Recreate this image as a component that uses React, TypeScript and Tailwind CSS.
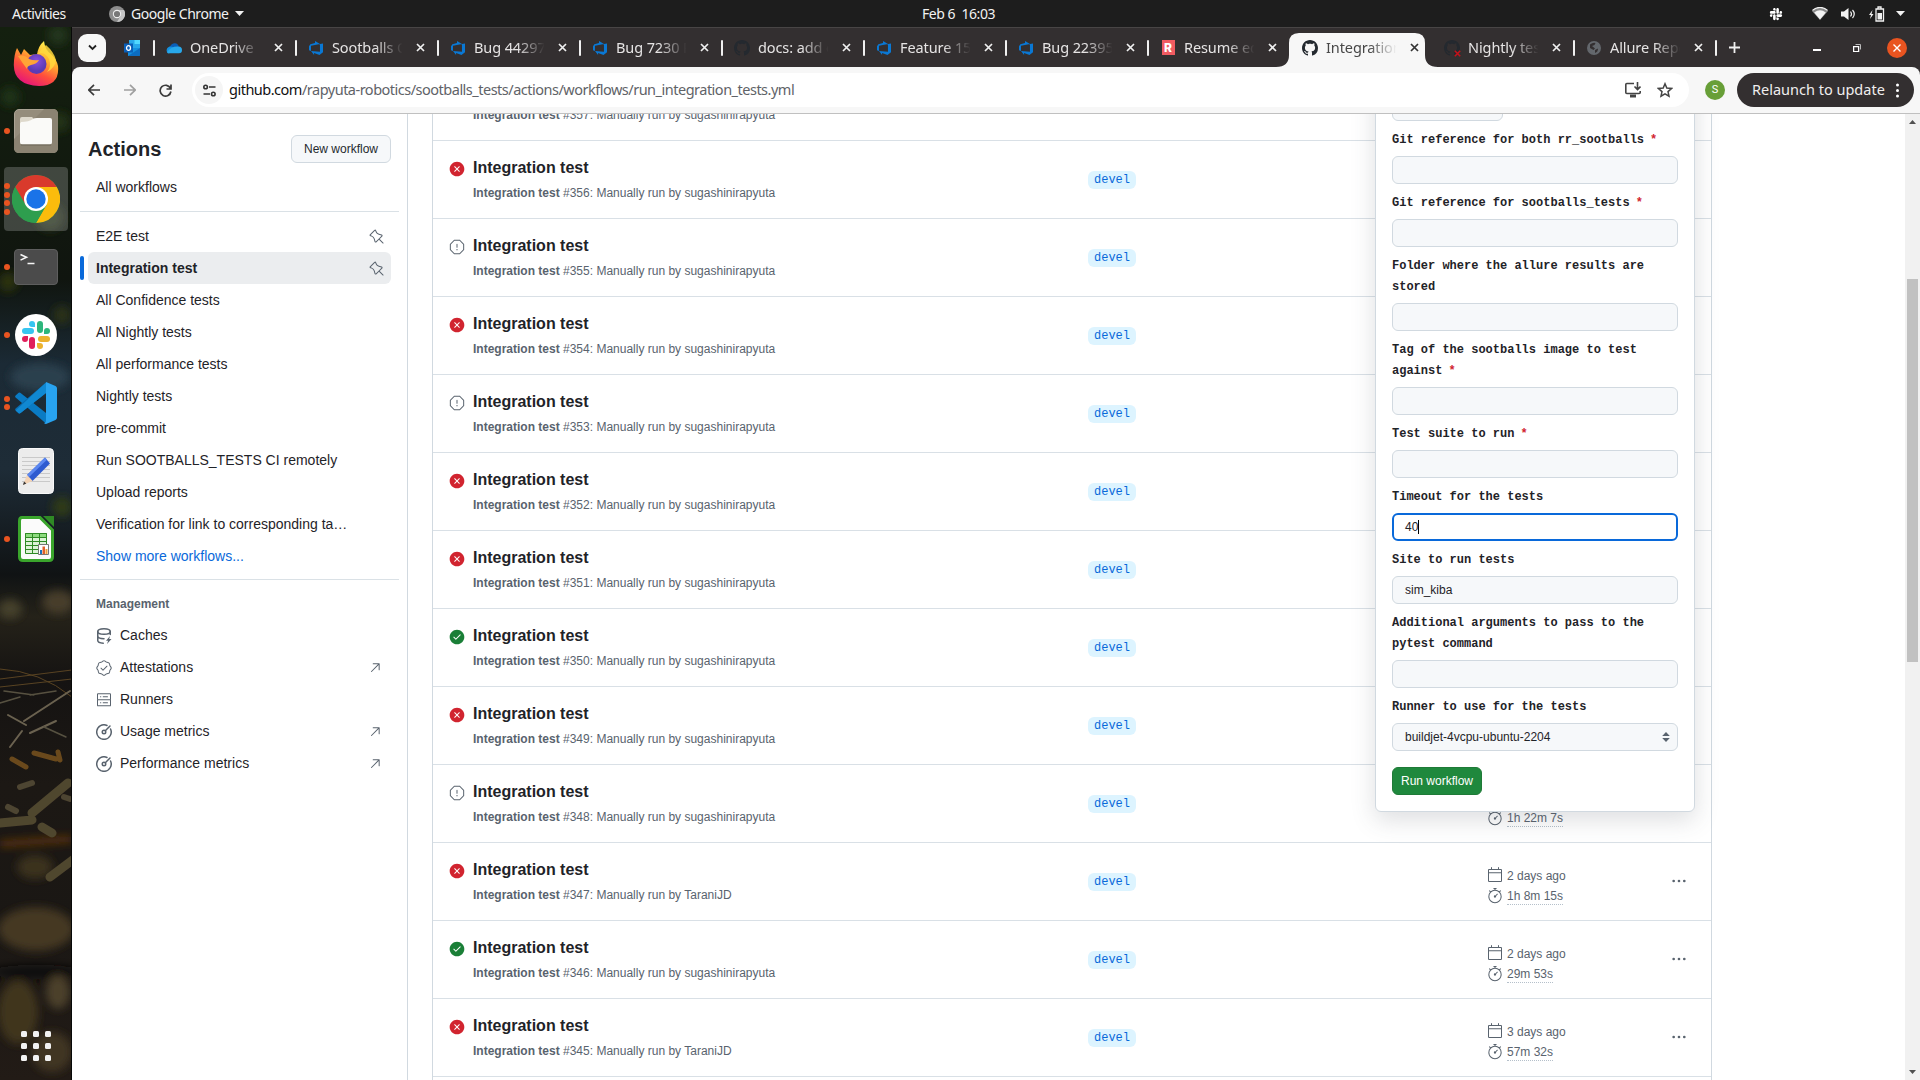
import React from 'react';
import {
  GoStopwatch, GoCalendar, GoPin, GoXCircleFill, GoCheckCircleFill, GoStop, GoKebabHorizontal,
  GoVerified, GoServer, GoArrowUpRight,
} from 'react-icons/go';
import { VscAzureDevops } from 'react-icons/vsc';
import { FaSlack } from 'react-icons/fa';

const ui = "font-['Noto_Sans',sans-serif]";

type IconProps = { className?: string };

function GithubMark({ className }: IconProps) {
  return (
    <svg className={className} viewBox="0 0 16 16" fill="currentColor">
      <path d="M8 0C3.580 0 0 3.580 0 8c0 3.540 2.290 6.530 5.470 7.590.4.070.550-.170.550-.380 0-.190-.010-.820-.010-1.490-2.010.370-2.530-.490-2.690-.940-.090-.230-.480-.940-.820-1.130-.280-.150-.680-.520-.010-.530.630-.010 1.080.580 1.230.820.720 1.210 1.870.870 2.330.660.070-.520.280-.870.510-1.070-1.780-.2-3.640-.890-3.640-3.950 0-.870.310-1.590.820-2.150-.080-.2-.360-1.020.080-2.120 0 0 .670-.210 2.200.820.640-.180 1.320-.270 2-.270.680 0 1.360.090 2 .270 1.530-1.040 2.200-.820 2.200-.820.440 1.100.160 1.920.080 2.120.510.560.820 1.270.820 2.150 0 3.070-1.870 3.750-3.650 3.950.290.250.540.730.540 1.480 0 1.070-.010 1.930-.010 2.200 0 .210.150.460.550.380A8.013 8.013 0 0 0 16 8c0-4.420-3.580-8-8-8Z" />
    </svg>
  );
}

function CacheIcon({ className }: IconProps) {
  return (
    <svg className={className} viewBox="0 0 16 16" fill="none" stroke="currentColor" strokeWidth="1.500">
      <ellipse cx="8" cy="3.500" rx="6.250" ry="2.750" />
      <path d="M1.750 3.500v9c0 1.300 2.200 2.500 5.500 2.700M1.750 8c0 1.400 2.300 2.700 6.250 2.700M14.250 3.500v3" strokeLinecap="round" />
      <path d="M14 8l-4 4.700h2.100L11 16l4.500-5h-2.300z" fill="currentColor" stroke="none" />
    </svg>
  );
}

function MeterIcon({ className }: IconProps) {
  return (
    <svg className={className} viewBox="0 0 16 16" fill="none" stroke="currentColor" strokeWidth="1.500" strokeLinecap="round">
      <path d="M11 1.450A7.250 7.250 0 1 0 14.550 5" />
      <circle cx="8" cy="8" r="1.750" />
      <path d="M9.300 6.700L14 2" />
    </svg>
  );
}

/* ---------- desktop top bar ---------- */

function TopBar() {
  return (
    <header className={`${ui} flex h-[27px] shrink-0 items-center bg-[#1d1d1d] text-[14px] leading-[27px] text-[#f2f2f2]`}>
      <div className="flex flex-1 items-center pl-3">
        <span className="w-[97px] whitespace-nowrap tracking-[-0.45px]">Activities</span>
        <svg className="h-4 w-4" viewBox="0 0 16 16">
          <circle cx="8" cy="8" r="8" fill="#8d8d8d" />
          <path d="M8 4h7A8 8 0 0 1 8 16l3.5-6z" fill="#c4c4c4" />
          <circle cx="8" cy="8" r="4.2" fill="#eee" />
          <circle cx="8" cy="8" r="3.1" fill="#777" />
        </svg>
        <span className="ml-[6px] whitespace-nowrap tracking-[-0.45px]">Google Chrome</span>
        <svg className="ml-[6px] h-[5px] w-[9px]" viewBox="0 0 9 5"><path d="M0 0h9L4.5 5z" fill="#f2f2f2" /></svg>
      </div>
      <span className="whitespace-pre tracking-[-0.45px]">Feb 6  16:03</span>
      <div className="flex flex-1 items-center justify-end pr-[15px] text-white">
        <FaSlack className="mr-[29px] h-[14px] w-[14px]" />
        <svg className="mr-[13px] h-[13px] w-4" viewBox="0 0 16 13">
          <path d="M0 4Q8-3.5 16 4L8 13z" fill="#8a8a8a" />
          <path d="M.4 3.4Q8-2.6 15.600 3.400" fill="none" stroke="#f2f2f2" strokeWidth="1.200" />
          <path d="M2.200 5.400Q8 1 13.800 5.400L8 12.500z" fill="#f2f2f2" />
        </svg>
        <svg className="mr-[12px] h-[14px] w-4" viewBox="0 0 16 14">
          <path d="M0 4.500h3L7.500 1v12L3 9.500H0z" fill="#f2f2f2" />
          <path d="M9.500 4.500q2 2.500 0 5M11.500 3q3.500 4 0 8" fill="none" stroke="#f2f2f2" strokeWidth="1.200" />
        </svg>
        <svg className="mr-[11px] h-[16px] w-[16px]" viewBox="0 0 16 16">
          <path d="M3.500 4L0 9h2l-1 4 3.500-5h-2z" fill="#f2f2f2" />
          <path d="M9 1h3v2H9zM7 3h7.500v12H7z" fill="none" stroke="#f2f2f2" strokeWidth="1.300" />
          <path d="M8.500 7H13v6.500H8.500z" fill="#f2f2f2" />
        </svg>
        <svg className="h-[5px] w-[9px]" viewBox="0 0 9 5"><path d="M0 0h9L4.5 5z" fill="#f2f2f2" /></svg>
      </div>
    </header>
  );
}

/* ---------- dock ---------- */

function Wallpaper() {
  return (
    <svg className="absolute inset-0 h-full w-full" viewBox="0 0 72 1053" preserveAspectRatio="none">
      <defs>
        <linearGradient id="wp" x1="0" y1="0" x2="0" y2="1">
          <stop offset="0" stopColor="#14200f" />
          <stop offset="0.24" stopColor="#10150f" />
          <stop offset="0.32" stopColor="#1b2a35" />
          <stop offset="0.42" stopColor="#1e2c37" />
          <stop offset="0.52" stopColor="#101314" />
          <stop offset="0.56" stopColor="#252219" />
          <stop offset="0.62" stopColor="#151312" />
          <stop offset="0.72" stopColor="#1c1814" />
          <stop offset="0.85" stopColor="#1a1714" />
          <stop offset="1" stopColor="#221b16" />
        </linearGradient>
        <filter id="soft" x="-50%" y="-50%" width="200%" height="200%"><feGaussianBlur stdDeviation="4" /></filter>
        <filter id="fine"><feGaussianBlur stdDeviation="0.700" /></filter>
      </defs>
      <rect width="72" height="1053" fill="url(#wp)" />
      <g filter="url(#soft)">
        <circle cx="58" cy="8" r="10" fill="#24361a" />
        <circle cx="10" cy="70" r="10" fill="#1b3314" />
        <circle cx="60" cy="95" r="10" fill="#243012" />
        <circle cx="50" cy="190" r="14" fill="#27321a" />
        <circle cx="8" cy="255" r="10" fill="#2b3310" />
        <circle cx="62" cy="288" r="9" fill="#2a3318" />
        <circle cx="62" cy="480" r="10" fill="#2f3a15" />
        <ellipse cx="40" cy="350" rx="30" ry="14" fill="#2a3f4d" />
        <ellipse cx="10" cy="582" rx="12" ry="10" fill="#45402c" />
        <ellipse cx="58" cy="575" rx="16" ry="12" fill="#463e2a" />
        <ellipse cx="36" cy="902" rx="38" ry="22" fill="#443823" />
        <ellipse cx="36" cy="945" rx="45" ry="7" fill="#11100f" />
        <ellipse cx="18" cy="985" rx="20" ry="32" fill="#40351f" />
        <ellipse cx="58" cy="965" rx="12" ry="17" fill="#4c4029" />
        <ellipse cx="52" cy="1025" rx="20" ry="20" fill="#403421" />
        <ellipse cx="35" cy="840" rx="18" ry="12" fill="#3b311f" />
        <rect x="0" y="811" width="72" height="7" fill="#5a3310" transform="rotate(-4 36 815)" />
      </g>
      <g filter="url(#fine)" fill="none" strokeLinecap="round">
        <path d="M0 642q40 2 72 28M0 652l72-9M0 660l72-8" stroke="#594322" strokeWidth="1" />
        <path d="M8 688l18 10M24 694l46-30M10 720l12-16M30 706l26-12" stroke="#6b6250" strokeWidth="2" />
        <path d="M0 676l20-6M30 668l26-4M44 700l22 10M4 664l30 4" stroke="#575141" strokeWidth="1.500" />
        <path d="M12 732l14 8M34 726l22 6M58 725l2 8" stroke="#6b4a1d" strokeWidth="5" />
        <path d="M32 786l36-30M0 796l32-3M42 800l10 6M50 850l24-18" stroke="#50462f" strokeWidth="9" />
        <path d="M8 780l8 4M20 760l12-4M64 770l6 2" stroke="#4d4430" strokeWidth="6" />
      </g>
      <path d="M71.500 0v1053" stroke="#080908" />
    </svg>
  );
}

function FirefoxIcon() {
  return (
    <svg className="h-[46px] w-[46px]" viewBox="0 0 46 46">
      <defs>
        <linearGradient id="ff" x1="0.8" y1="0.050" x2="0.300" y2="1">
          <stop offset="0" stopColor="#fff44f" /><stop offset="0.350" stopColor="#ffb02e" />
          <stop offset="0.650" stopColor="#ff4f3c" /><stop offset="1" stopColor="#e5127c" />
        </linearGradient>
        <radialGradient id="ffp" cx="0.500" cy="0.350"><stop offset="0" stopColor="#8b4fe0" /><stop offset="1" stopColor="#5b3bb5" /></radialGradient>
      </defs>
      <path d="M4 8l4 7 3-6 6 6q4-1 7 0 1-9 7-14 1 9 7 13 6 6 7 12 2 20-19 20Q1 45 .8 25 1 14 4 8z" fill="url(#ff)" />
      <circle cx="23.500" cy="24" r="10" fill="url(#ffp)" />
      <path d="M5 16q7-2 11 3 5 2 10 1-2 4-8 5-4 1-4 4-4-5-9-13z" fill="#ffa436" />
      <path d="M24 14q8-3 12 5 3 8-2 13 8-4 9-12-2-8-10-15z" fill="#ffd83d" opacity="0.850" />
    </svg>
  );
}

function FilesIcon() {
  return (
    <svg className="h-[44px] w-[44px]" viewBox="0 0 44 44">
      <rect x="0.500" y="0.500" width="43" height="43" rx="4.500" fill="#958d7c" stroke="#aaa394" />
      <path d="M0 30L30 0h9q5 0 5 5v34q0 5-5 5H5q-5 0-5-5z" fill="#8b8372" />
      <path d="M6 13V10q0-2 2-2h10l3 3h4v4H6z" fill="#ded9cc" />
      <rect x="6" y="13" width="32" height="22.500" rx="2.500" fill="#fafaf8" />
      <path d="M7 13q8 0 12-3 1-1 4-1h13q2 0 2 2v6H6z" fill="#fafaf8" />
      <path d="M7 36h30" stroke="#6d6656" />
    </svg>
  );
}

function ChromeIcon() {
  return (
    <svg className="h-12 w-12" viewBox="0 0 48 48">
      <circle cx="24" cy="24" r="24" fill="#2e9e4e" />
      <path d="M3.200 12A24 24 0 0 1 44.800 12H24L13.600 30z" fill="#d93a2c" />
      <path d="M44.800 12A24 24 0 0 1 24 48L34.400 30 24 12z" fill="#fbbc0c" />
      <path d="M13.600 30L3.200 12A24 24 0 0 0 24 48l10.400-18z" fill="#2e9e4e" />
      <circle cx="24" cy="24" r="12" fill="#fff" />
      <circle cx="24" cy="24" r="9.700" fill="#1a73e8" />
    </svg>
  );
}

function TerminalIcon() {
  return (
    <svg className="h-9 w-[44px]" viewBox="0 0 44 36">
      <rect x="0.500" y="0.500" width="43" height="35" rx="3.500" fill="#4b4b4b" stroke="#5e5e5e" />
      <path d="M6.500 5.500l6 2.800-6 2.800M13.500 14.500h7" fill="none" stroke="#f5f5f5" strokeWidth="1.600" />
    </svg>
  );
}

function SlackIcon() {
  return (
    <svg className="h-[42px] w-[42px]" viewBox="0 0 42 42">
      <circle cx="21" cy="21" r="21" fill="#fff" />
      <g strokeWidth="6" strokeLinecap="round" fill="none">
        <path d="M10 17h6" stroke="#36c5f0" /><path d="M17 10v0" stroke="#36c5f0" />
        <path d="M25 10v6" stroke="#2eb67d" /><path d="M32 17v0" stroke="#2eb67d" />
        <path d="M26 25h6" stroke="#ecb22e" /><path d="M25 32v0" stroke="#ecb22e" />
        <path d="M17 26v6" stroke="#e01e5a" /><path d="M10 25v0" stroke="#e01e5a" />
      </g>
      <path d="M17 10h3v3h-3z" fill="#36c5f0" /><path d="M29 17h3v3h-3z" fill="#2eb67d" />
      <path d="M22 29h3v3h-3z" fill="#ecb22e" /><path d="M10 22h3v3h-3z" fill="#e01e5a" />
    </svg>
  );
}

function CodeIcon() {
  return (
    <svg className="h-[42px] w-[42px]" viewBox="0 0 42 42">
      <path d="M.6 13.500l3-2.700q1-.6 2 .1L31 31v10.500L.6 15.500q-1-1 0-2z" fill="#0a7bc4" />
      <path d="M.6 28.500l3 2.700q1 .6 2-.1L31 11V.5L.6 26.500q-1 1 0 2z" fill="#0a6cb0" />
      <path d="M.6 28.500l3 2.700q1 .6 2-.1L31 11V.5z" fill="#1088d2" />
      <path d="M31 0l9.500 4q1.500.8 1.500 2.300v29.400q0 1.500-1.500 2.300L31 42q-1 0-2-1 2 0 2-2z" fill="#28a3f0" />
    </svg>
  );
}

function EditorIcon() {
  return (
    <svg className="h-[46px] w-9" viewBox="0 0 36 46">
      <rect x="0.500" y="0.500" width="35" height="45" rx="4" fill="#ececec" stroke="#fafafa" />
      <path d="M4 9.500h28M4 13.500h28M4 17.500h28M4 21.500h28M4 25.500h28M4 29.500h28M4 33.500h28" stroke="#c9c9c9" />
      <path d="M9 27L27 9.500l5 6L14.500 33z" fill="#2e5bd0" />
      <path d="M9 27L27 9.500l2 2.200L11 29z" fill="#5b87f0" />
      <path d="M9 27l5.500 6L5 37z" fill="#f3d3b5" />
      <path d="M6 33.500L5 37l3.300-1.400z" fill="#333" />
    </svg>
  );
}

function CalcIcon() {
  return (
    <svg className="h-[46px] w-9" viewBox="0 0 36 46">
      <path d="M4 1.500h18L34.500 14v27q0 3.500-3.500 3.500H5q-3.500 0-3.500-3.500V5Q1.500 1.500 4 1.500z" fill="#fbfbfb" stroke="#3aa52c" strokeWidth="3" />
      <path d="M25 0h11v11z" fill="#2f8a25" />
      <g stroke="#2f8a25" fill="#dcf3d6">
        <path d="M7.500 17.500h21v20h-21z" />
        <path d="M7.500 17.500h21v4h-21z" fill="#8ddb7e" />
        <path d="M7.500 25.500h21M7.500 29.500h21M7.500 33.500h21M14.500 17.500v20M21.500 17.500v20" />
      </g>
      <path d="M20.500 28.500h10v10h-10z" fill="#fff" stroke="#777" />
      <path d="M22 34h2v4h-2z" fill="#1b75bc" /><path d="M24.500 30.500h2.500V38h-2.500z" fill="#e0602a" /><path d="M27.500 33h2v5h-2z" fill="#f0a13a" />
    </svg>
  );
}

const dock = [
  { name: 'firefox', icon: <FirefoxIcon />, dots: 0 },
  { name: 'files', icon: <FilesIcon />, dots: 1 },
  { name: 'chrome', icon: <ChromeIcon />, dots: 4, active: true },
  { name: 'terminal', icon: <TerminalIcon />, dots: 1 },
  { name: 'slack', icon: <SlackIcon />, dots: 1 },
  { name: 'code', icon: <CodeIcon />, dots: 2 },
  { name: 'editor', icon: <EditorIcon />, dots: 0 },
  { name: 'calc', icon: <CalcIcon />, dots: 1 },
];

function Dock() {
  return (
    <nav className="relative flex w-[72px] shrink-0 flex-col overflow-hidden">
      <Wallpaper />
      <div className="relative flex flex-col gap-1 px-1 pt-1">
        {dock.map((d) => (
          <div key={d.name} className={`relative flex h-16 w-16 items-center justify-center rounded ${d.active ? 'bg-white/20' : ''}`}>
            <div className="absolute left-0 flex flex-col gap-[2.500px]">
              {Array.from({ length: d.dots }, (_, i) => (
                <span key={i} className="h-[6px] w-[6px] rounded-full bg-[#e95420]" />
              ))}
            </div>
            {d.icon}
          </div>
        ))}
      </div>
      <div className="relative mt-auto mb-[19px] grid grid-cols-3 gap-[6px] self-center">
        {Array.from({ length: 9 }, (_, i) => (
          <span key={i} className="h-[6px] w-[6px] rounded-[1.500px] bg-[#f2f2f2]" />
        ))}
      </div>
    </nav>
  );
}

/* ---------- browser chrome ---------- */

const Azure = () => <VscAzureDevops className="h-4 w-4 text-[#0a78d4]" />;

const OneDrive = () => (
  <svg className="h-4 w-4" viewBox="0 0 16 16">
    <path d="M4 6.500Q6 3 9 3.200q3 .3 3.800 3.300l-4 3z" fill="#0a5fb8" />
    <path d="M1 12Q-.5 8 3.500 6.500q3-.5 5 1.500L3 13.500q-1.500 0-2-1.500z" fill="#1490df" />
    <path d="M12.500 6.500q3.500 0 3.500 3.500 0 3.200-3 3.300H3q-1 0-2-1 4-6.300 11.500-5.800z" fill="#28a8ea" />
  </svg>
);

const Resume = () => (
  <span className="flex h-[15px] w-[13px] items-center justify-center bg-[#f05b61] font-['Inter',sans-serif] text-[12px] font-extrabold text-white">R</span>
);

const Globe = () => (
  <svg className="h-[14px] w-[14px]" viewBox="0 0 14 14">
    <circle cx="7" cy="7" r="7" fill="#63676c" />
    <path d="M3 3.500q3-2.500 5.500-1.500L7.500 4 5 5l3 2.500L6.500 9 3 7zM8 9l3-1.500Q11 11 8 12z" fill="#332f30" />
  </svg>
);

const NightlyIcon = () => (
  <span className="relative">
    <GithubMark className="h-4 w-4 text-[#24292f]" />
    <svg className="absolute -right-[1px] -bottom-[1px] h-[7px] w-[7px]" viewBox="0 0 7 7"><path d="M.8.800l5.400 5.400M6.200.800L.8 6.200" stroke="#c4121a" strokeWidth="1.600" /></svg>
  </span>
);

type Tab = { label: string; icon: React.ReactNode; active?: boolean; noDivider?: boolean };
const tabs: Tab[] = [
  { label: 'OneDrive', icon: <OneDrive /> },
  { label: 'Sootballs Ops', icon: <Azure /> },
  { label: 'Bug 44297: S', icon: <Azure /> },
  { label: 'Bug 7230 Ro', icon: <Azure /> },
  { label: 'docs: add ex', icon: <GithubMark className="h-4 w-4 text-[#24292f]" /> },
  { label: 'Feature 1563', icon: <Azure /> },
  { label: 'Bug 22395: A', icon: <Azure /> },
  { label: 'Resume edit', icon: <Resume /> },
  { label: 'Integration test', icon: <GithubMark className="h-4 w-4 text-[#24292f]" />, active: true, noDivider: true },
  { label: 'Nightly tests', icon: <NightlyIcon />, noDivider: true },
  { label: 'Allure Report', icon: <Globe /> },
];

function TabStrip() {
  return (
    <div className={`${ui} flex h-10 shrink-0 items-center border-t border-[#484545] bg-[#332f30] text-[14.500px] text-[#e6e4e4]`}>
      <span className="ml-[6px] flex h-7 w-7 items-center justify-center rounded-[9px] bg-[#f7f7f7]">
        <svg className="h-[7px] w-[9px]" viewBox="0 0 9 7"><path d="M1 1.500l3.500 3.500L8 1.500" fill="none" stroke="#222" strokeWidth="1.800" /></svg>
      </span>
      <svg className="ml-[18px] h-4 w-4" viewBox="0 0 16 16">
        <path d="M5 0h11v8H5z" fill="#28a8ea" /><path d="M10.500 0H16v4h-5.500z" fill="#50d9ff" />
        <path d="M4 8h12v6.500q0 1.500-1.500 1.500H4z" fill="#1490df" /><path d="M4 16L16 8v6.500q0 1.500-1.500 1.500z" fill="#0c6cc0" />
        <path d="M0 3.500h9v9H0z" fill="#0a5fb8" /><ellipse cx="4.500" cy="8" rx="2" ry="2.300" fill="none" stroke="#fff" strokeWidth="1.300" />
      </svg>
      <div className="ml-[13px] flex h-full items-center">
        {tabs.map((t) => (
          <div key={t.label} className={`relative flex h-full w-[142px] items-center ${t.active ? 'text-[#474747]' : ''}`}>
            {t.active && (
              <svg className="absolute -left-[13px] bottom-0 h-[34px] w-[162px]" viewBox="0 0 162 34">
                <path d="M0 34q13 0 13-12V10Q13 0 23 0H139q10 0 10 10v12q0 12 13 12z" fill="#f7f7f7" />
              </svg>
            )}
            <span className={`h-4 w-[2px] rounded-full ${t.noDivider ? '' : 'bg-[#f0f0f0]'}`} />
            <span className="relative ml-[11px] flex h-4 w-4 items-center justify-center">{t.icon}</span>
            <span className="relative ml-[8px] w-[72px] overflow-hidden whitespace-nowrap tracking-[-0.100px] [mask-image:linear-gradient(to_right,#000_60%,transparent_98%)]">
              {t.label}
            </span>
            <svg className="relative ml-[12px] h-[9px] w-[9px]" viewBox="0 0 9 9">
              <path d="M1 1l7 7M8 1L1 8" stroke={t.active ? '#333' : '#f0f0f0'} strokeWidth="1.700" />
            </svg>
          </div>
        ))}
      </div>
      <span className="h-4 w-[2px] rounded-full bg-[#f0f0f0]" />
      <svg className="ml-[12px] h-[11px] w-[11px]" viewBox="0 0 11 11"><path d="M5.500 0v11M0 5.500h11" stroke="#f0f0f0" strokeWidth="1.800" /></svg>
      <div className="ml-auto flex items-center pr-[13px]">
        <span className="mt-[5px] h-[1.500px] w-2 bg-white" />
        <svg className="ml-[32px] h-2 w-2" viewBox="0 0 8 8"><path d="M.6 2.600h5v5h-5z" fill="none" stroke="#fff" strokeWidth="1.300" /><path d="M2.500.500h5v5" fill="none" stroke="#bbb" /></svg>
        <span className="ml-[26px] flex h-5 w-5 items-center justify-center rounded-full bg-[#e95420]">
          <svg className="h-2 w-2" viewBox="0 0 8 8"><path d="M.5.500l7 7M7.500.500l-7 7" stroke="#fff" strokeWidth="1.400" /></svg>
        </span>
      </div>
    </div>
  );
}

function Toolbar() {
  return (
    <div className="h-[47px] shrink-0 bg-[#332f30]">
      <div className={`${ui} flex h-full items-center rounded-t-[8px] border-b border-[#c0c0c0] bg-[#f7f7f7] text-[14.500px]`}>
        <svg className="ml-[16px] h-3 w-3" viewBox="0 0 12 12"><path d="M12 6H1M6 .8L.8 6 6 11.200" fill="none" stroke="#3c3c3c" strokeWidth="1.700" /></svg>
        <svg className="ml-[24px] h-3 w-3" viewBox="0 0 12 12"><path d="M0 6h11M6 .8L11.200 6 6 11.200" fill="none" stroke="#a0a0a0" strokeWidth="1.700" /></svg>
        <svg className="ml-[23px] h-[13px] w-[13px]" viewBox="0 0 13 13"><path d="M11.500 4.500A5.400 5.400 0 1 0 11.900 7.500M12 .5V5H7.500" fill="none" stroke="#3c3c3c" strokeWidth="1.700" /></svg>
        <div className="ml-[20px] flex h-[34px] w-[1497px] items-center rounded-full bg-white">
          <span className="ml-[3px] flex h-7 w-7 items-center justify-center rounded-full bg-[#f5f5f5]">
            <svg className="h-[13px] w-[13px]" viewBox="0 0 13 13" fill="none" stroke="#333" strokeWidth="1.600">
              <circle cx="2.600" cy="3" r="1.800" /><path d="M6 3h6.500M.5 10H7" /><circle cx="10.300" cy="10" r="1.800" />
            </svg>
          </span>
          <span className="ml-[6px] whitespace-nowrap tracking-[-0.500px] text-[#5f6368]"><span className="text-[#111]">github.com</span>/rapyuta-robotics/sootballs_tests/actions/workflows/run_integration_tests.yml</span>
          <svg className="mr-[16px] ml-auto h-4 w-4" viewBox="0 0 16 16" fill="none" stroke="#444" strokeWidth="1.600">
            <path d="M9 1.500H1.800q-1 0-1 1v8q0 1 1 1h12.400q1 0 1-1V9M12.500 0v7M9.500 4.500l3 3 3-3" /><path d="M5 14h6" strokeWidth="3" />
          </svg>
          <svg className="mr-[16px] h-4 w-4" viewBox="0 0 16 16"><path d="M8 1.800l1.800 4.300 4.700.4-3.500 3.100 1 4.600L8 11.800l-4 2.400 1-4.600L1.500 6.500l4.700-.4z" fill="none" stroke="#444" strokeWidth="1.500" /></svg>
        </div>
        <span className="ml-[16px] flex h-5 w-5 items-center justify-center rounded-full bg-[#689f38] font-['Roboto',sans-serif] text-[11px] text-white">S</span>
        <span className="ml-[12px] flex h-[34px] w-[177px] items-center rounded-full bg-[#332f30] pl-[15px] text-[#f0eeee]">
          <span className="w-[132px] whitespace-nowrap">Relaunch to update</span>
          <svg className="ml-[12px] h-[15px] w-[3px]" viewBox="0 0 3 15"><circle cx="1.500" cy="2" r="1.500" fill="#fff" /><circle cx="1.500" cy="7.500" r="1.500" fill="#fff" /><circle cx="1.500" cy="13" r="1.500" fill="#fff" /></svg>
        </span>
      </div>
    </div>
  );
}

/* ---------- page sidebar ---------- */

const workflows = [
  'E2E test', 'Integration test', 'All Confidence tests', 'All Nightly tests', 'All performance tests', 'Nightly tests',
  'pre-commit', 'Run SOOTBALLS_TESTS CI remotely', 'Upload reports', 'Verification for link to corresponding ta…',
];

const management = [
  { label: 'Caches', Icon: CacheIcon, external: false },
  { label: 'Attestations', Icon: GoVerified, external: true },
  { label: 'Runners', Icon: GoServer, external: false },
  { label: 'Usage metrics', Icon: MeterIcon, external: true },
  { label: 'Performance metrics', Icon: MeterIcon, external: true },
];

function Sidebar() {
  return (
    <aside className="w-[336px] shrink-0 border-r border-[#d1d9e0] px-2 pt-[21px] text-[14px] text-[#1f2328]">
      <div className="flex items-center justify-between px-2">
        <h2 className="text-[20px] leading-7 font-bold">Actions</h2>
        <button className="h-7 w-[100px] rounded-md border border-[#d1d9e0] bg-[#f6f8fa] text-[12px] leading-[26px] text-[#25292e]">New workflow</button>
      </div>
      <div className="mt-2 h-8 px-4 leading-8">All workflows</div>
      <hr className="mt-2 mb-2 border-[#d1d9e0]/80" />
      {workflows.map((w, i) => (
        <div
          key={w}
          className={`relative mx-2 flex h-8 items-center justify-between rounded-md px-2 ${i === 1 ? 'bg-[#ebedef] font-bold' : ''}`}
        >
          {i === 1 && <span className="absolute top-1 -left-2 h-6 w-1 rounded-md bg-[#0969da]" />}
          <span className="whitespace-nowrap">{w}</span>
          {i < 2 && <GoPin className="-mr-[2px] mt-[1px] h-4 w-4 text-[#59636e]" />}
        </div>
      ))}
      <div className="h-8 px-4 leading-8 text-[#0969da]">Show more workflows...</div>
      <hr className="mt-[7px] border-[#d1d9e0]/80" />
      <h3 className="mt-[15px] mb-[6px] px-4 text-[12px] leading-[18px] font-bold text-[#59636e]">Management</h3>
      {management.map(({ label, Icon, external }) => (
        <div key={label} className="flex h-8 items-center px-4">
          <Icon className="mt-[1px] h-4 w-4 text-[#59636e]" />
          <span className="ml-2">{label}</span>
          {external && <GoArrowUpRight className="mt-[2px] ml-auto h-4 w-4 text-[#59636e]" />}
        </div>
      ))}
    </aside>
  );
}

/* ---------- run list ---------- */

type Status = 'fail' | 'stop' | 'ok';
const S = 'sugashinirapyuta';
const runs: { n: number; s: Status; by: string; ago: string; t: string }[] = [
  { n: 357, s: 'fail', by: S, ago: '', t: '' },
  { n: 356, s: 'fail', by: S, ago: '', t: '' },
  { n: 355, s: 'stop', by: S, ago: '', t: '' },
  { n: 354, s: 'fail', by: S, ago: '', t: '' },
  { n: 353, s: 'stop', by: S, ago: '', t: '' },
  { n: 352, s: 'fail', by: S, ago: '', t: '' },
  { n: 351, s: 'fail', by: S, ago: '', t: '' },
  { n: 350, s: 'ok', by: S, ago: '', t: '' },
  { n: 349, s: 'fail', by: S, ago: '', t: '' },
  { n: 348, s: 'stop', by: S, ago: '2 days ago', t: '1h 22m 7s' },
  { n: 347, s: 'fail', by: 'TaraniJD', ago: '2 days ago', t: '1h 8m 15s' },
  { n: 346, s: 'ok', by: S, ago: '2 days ago', t: '29m 53s' },
  { n: 345, s: 'fail', by: 'TaraniJD', ago: '3 days ago', t: '57m 32s' },
];

function StatusIcon({ s }: { s: Status }) {
  if (s === 'fail') return <GoXCircleFill className="h-4 w-4 text-[#d1242f]" />;
  if (s === 'ok') return <GoCheckCircleFill className="h-4 w-4 text-[#1a7f37]" />;
  return <GoStop className="h-4 w-4 text-[#59636e]" />;
}

function RunList() {
  return (
    <section className="-mt-[51px] ml-6 h-[1100px] w-[1280px] shrink-0 border-x border-[#d1d9e0] text-[12px] text-[#59636e]">
      {runs.map((r) => (
        <div key={r.n} className="flex h-[78px] border-b border-[#d9e0e6]">
          <div className="mt-[20px] ml-4"><StatusIcon s={r.s} /></div>
          <div className="ml-2 w-[615px]">
            <div className="mt-[15px] text-[16px] leading-6 font-bold text-[#1f2328]">Integration test</div>
            <div className="mt-[4px] leading-[18px]"><b>Integration test</b> #{r.n}: Manually run by {r.by}</div>
          </div>
          <div className="w-[399px] pt-[30px]">
            <span className="block h-[18px] w-[48px] rounded-md bg-[#ddf4ff] text-center font-['Liberation_Mono',monospace] leading-[18px] text-[#0969da]">devel</span>
          </div>
          {r.ago && (
            <>
              <div className="w-[184px] pt-[22px]">
                <div className="flex h-[21px] items-center"><GoCalendar className="-mt-[2px] h-4 w-4" /><span className="ml-1">{r.ago}</span></div>
                <div className="flex h-[21px] items-center"><GoStopwatch className="-mt-[2px] h-4 w-4" /><span className="ml-1 h-[17px] border-b border-dotted border-[#b5c0ca] leading-[16px]">{r.t}</span></div>
              </div>
              <GoKebabHorizontal className="mt-[30px] h-4 w-4" />
            </>
          )}
        </div>
      ))}
    </section>
  );
}

/* ---------- run workflow form ---------- */

const fields: { label: string; required?: boolean; value?: string; focus?: boolean; select?: boolean }[] = [
  { label: 'Git reference for both rr_sootballs', required: true },
  { label: 'Git reference for sootballs_tests', required: true },
  { label: 'Folder where the allure results are stored' },
  { label: 'Tag of the sootballs image to test against', required: true },
  { label: 'Test suite to run', required: true },
  { label: 'Timeout for the tests', value: '40', focus: true },
  { label: 'Site to run tests', value: 'sim_kiba' },
  { label: 'Additional arguments to pass to the pytest command' },
  { label: 'Runner to use for the tests', value: 'buildjet-4vcpu-ubuntu-2204', select: true },
];

function RunForm() {
  return (
    <div className="absolute -top-[40px] left-[1303px] w-[320px] rounded-md border border-[#d1d9e0] bg-white px-4 pb-4 text-[12px] text-[#1f2328] shadow-[0_8px_24px_rgba(66,74,83,0.180)]">
      <div className="mt-[18px] h-7 w-[111px] rounded-md border border-[#d1d9e0] bg-[#f6f8fa]" />
      {fields.map((f) => (
        <div key={f.label} className="mt-[9px]">
          <div className="font-['Liberation_Mono',monospace] leading-[21px] font-bold">
            {f.label}
            {f.required && <span className="ml-[6px] text-[#d1242f]">*</span>}
          </div>
          <div
            className={`mt-[5px] flex h-7 items-center rounded-md px-3 ${
              f.focus ? 'border-2 border-[#0969da] bg-white pl-[11px]' : 'border border-[#d1d9e0] bg-[#f6f8fa]'
            }`}
          >
            <span>{f.value}</span>
            {f.focus && <span className="h-[14px] w-px bg-black" />}
            {f.select && (
              <svg className="-mr-[5px] ml-auto h-[10px] w-2" viewBox="0 0 8 10"><path d="M4 0l3.800 4H.2zM4 10l3.800-4H.2z" fill="#59636e" /></svg>
            )}
          </div>
        </div>
      ))}
      <button className="mt-4 block h-7 w-[90px] rounded-md border border-[#1f7a37] bg-[#1f883d] leading-[24px] text-white">Run workflow</button>
    </div>
  );
}

function Scrollbar() {
  return (
    <div className="ml-auto flex w-[15px] shrink-0 flex-col items-center bg-[#f1f1f1]">
      <svg className="mt-[6px] h-1 w-[7px]" viewBox="0 0 7 4"><path d="M3.500 0L7 4H0z" fill="#505050" /></svg>
      <div className="mt-[155px] h-[383px] w-[11px] bg-[#c1c1c1]" />
      <svg className="mt-auto mb-[6px] h-1 w-[7px]" viewBox="0 0 7 4"><path d="M3.500 4L7 0H0z" fill="#505050" /></svg>
    </div>
  );
}

export default function App() {
  return (
    <div className="flex h-[1080px] w-[1920px] flex-col overflow-hidden bg-white font-['Liberation_Sans',Arial,sans-serif]">
      <TopBar />
      <div className="flex min-h-0 flex-1">
        <Dock />
        <div className="flex min-w-0 flex-1 flex-col">
          <TabStrip />
          <Toolbar />
          <main className="relative flex min-h-0 flex-1 overflow-hidden bg-white">
            <Sidebar />
            <RunList />
            <RunForm />
            <Scrollbar />
          </main>
        </div>
      </div>
    </div>
  );
}
